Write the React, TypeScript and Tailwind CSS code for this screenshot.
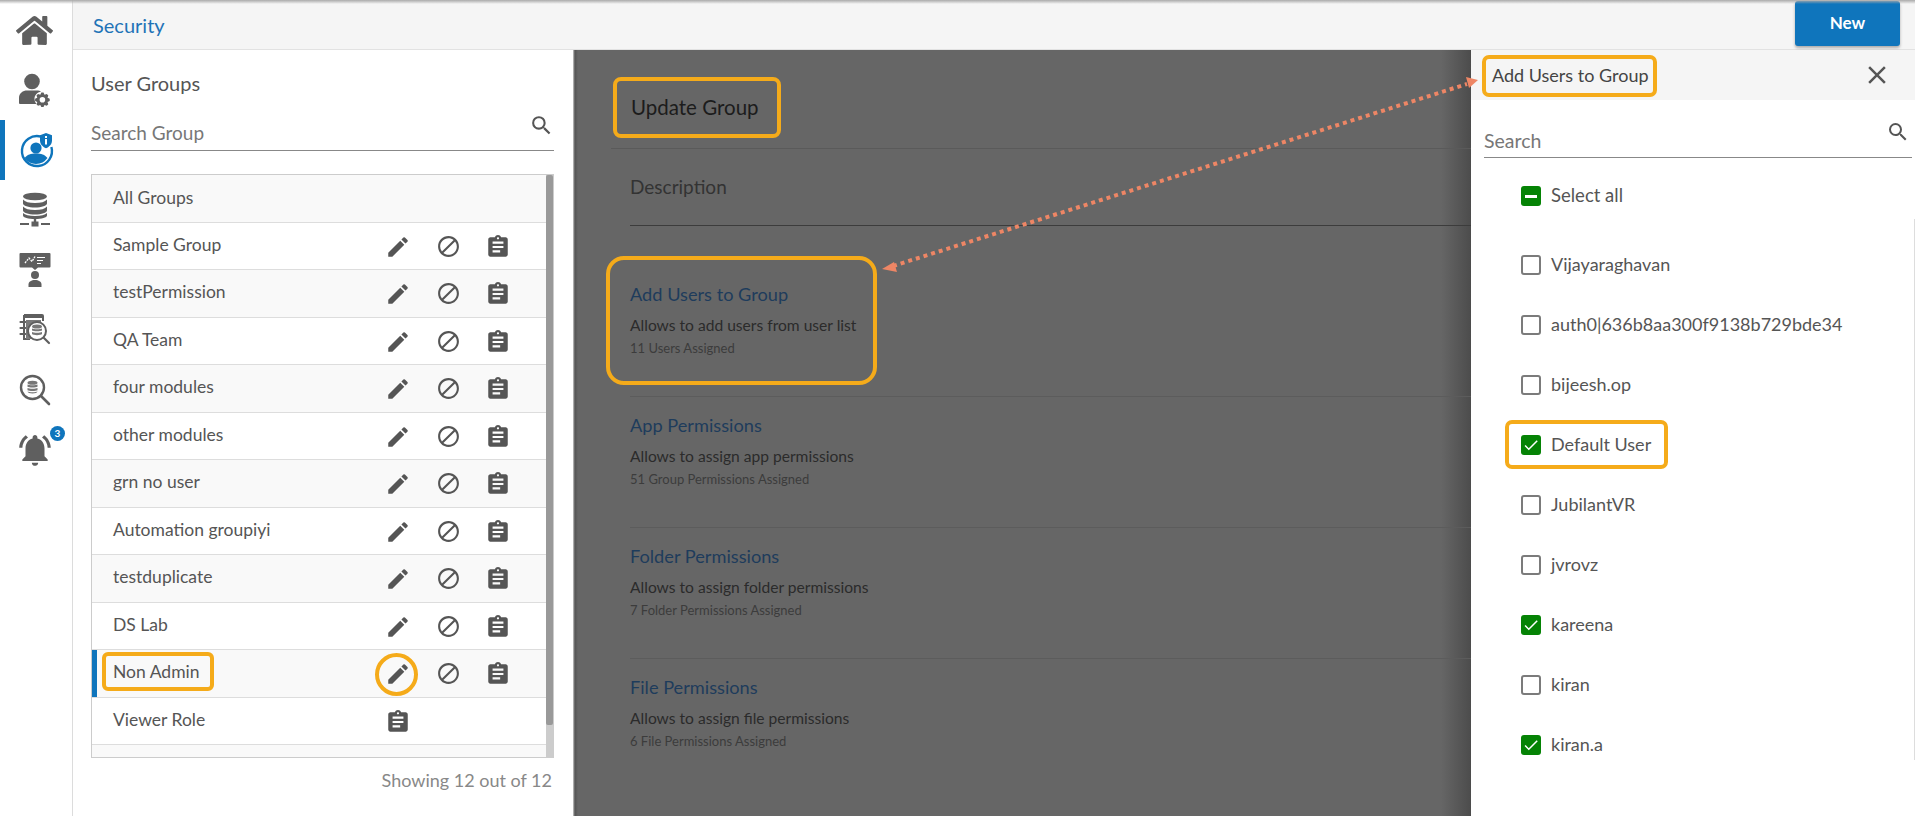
import { FaHome } from "react-icons/fa";
import { MdEdit, MdBlock, MdAssignment, MdSearch, MdClose, MdNotificationsActive, MdCheck } from "react-icons/md";
import type { ReactNode } from "react";

const GROUPS = [
  "Sample Group",
  "testPermission",
  "QA Team",
  "four modules",
  "other modules",
  "grn no user",
  "Automation groupiyi",
  "testduplicate",
  "DS Lab",
  "Non Admin",
];

const SECTIONS = [
  { title: "Add Users to Group", text: "Allows to add users from user list", count: "11 Users Assigned" },
  { title: "App Permissions", text: "Allows to assign app permissions", count: "51 Group Permissions Assigned" },
  { title: "Folder Permissions", text: "Allows to assign folder permissions", count: "7 Folder Permissions Assigned" },
  { title: "File Permissions", text: "Allows to assign file permissions", count: "6 File Permissions Assigned" },
];

const USERS = [
  { name: "Vijayaraghavan", checked: false },
  { name: "auth0|636b8aa300f9138b729bde34", checked: false },
  { name: "bijeesh.op", checked: false },
  { name: "Default User", checked: true },
  { name: "JubilantVR", checked: false },
  { name: "jvrovz", checked: false },
  { name: "kareena", checked: true },
  { name: "kiran", checked: false },
  { name: "kiran.a", checked: true },
];

const UserGearIcon = () => (
  <svg width="34" height="34" viewBox="0 0 34 34" fill="#5f5f5f">
    <circle cx="14" cy="8.500" r="7.800" />
    <path d="M1 31v-6c0-5 4-7.500 8-7.500h10c1.500 0 3 .4 4 1-4 1-6.500 4-6.500 7 0 2 .7 4 2 5.500H2a1 1 0 0 1-1-1z" />
    <path d="M25.500 19.500l1 2.200 2.300-.7 1.500 1.500-.8 2.200 2.200 1v2.300l-2.200 1 .8 2.200-1.500 1.500-2.300-.8-1 2.100h-2.200l-1-2.100-2.300.8-1.500-1.500.8-2.200-2.200-1v-2.300l2.200-1-.8-2.200 1.500-1.500 2.300.7 1-2.200zM24.400 24a2.800 2.800 0 1 0 0 5.600 2.800 2.800 0 0 0 0-5.600z" fillRule="evenodd" />
  </svg>
);

const SecurityIcon = () => (
  <svg width="36" height="36" viewBox="0 0 36 36">
    <path d="M22 4.600A15 15 0 1 0 32.400 15" fill="none" stroke="#0f75bc" strokeWidth="2.400" />
    <circle cx="17" cy="16" r="5.600" fill="#0f75bc" />
    <path d="M5.500 26c2.500-3.500 6.500-4.600 11.500-4.600s9 1.100 11.500 4.600A15 15 0 0 1 17 32 15 15 0 0 1 5.500 26z" fill="#0f75bc" />
    <path d="M27 1l6 2.200v5c0 4-2.600 6.500-6 8-3.400-1.500-6-4-6-8v-5z" fill="#0f75bc" />
    <rect x="26" y="7" width="2" height="5.500" fill="#fff" />
    <rect x="26" y="4" width="2" height="2" fill="#fff" />
  </svg>
);

const DatabaseIcon = () => (
  <svg width="32" height="36" viewBox="0 0 32 36" fill="#5f5f5f">
    <ellipse cx="16" cy="4.500" rx="12" ry="3.800" />
    <path d="M4 7.500c2 2.500 6 3.500 12 3.500s10-1 12-3.500v4c0 2.200-5.400 4-12 4s-12-1.800-12-4z" />
    <path d="M4 14.500c2 2.500 6 3.500 12 3.500s10-1 12-3.500v4c0 2.200-5.400 4-12 4s-12-1.800-12-4z" />
    <path d="M4 21c2 2 6 3 12 3s10-1 12-3v2.500c0 2-5.400 3.500-12 3.500s-12-1.500-12-3.500z" />
    <rect x="14.800" y="26" width="2.400" height="6" />
    <rect x="12.500" y="29.500" width="7" height="5" />
    <rect x="1" y="31" width="9" height="2" />
    <rect x="22" y="31" width="9" height="2" />
  </svg>
);

const PresenterIcon = () => (
  <svg width="32" height="36" viewBox="0 0 32 36">
    <path d="M1.500 1h29a1 1 0 0 1 1 1v12.500a1 1 0 0 1-1 1H19l-3 2.500-3-2.500H1.500a1 1 0 0 1-1-1V2a1 1 0 0 1 1-1z" fill="#5f5f5f" />
    <path d="M6 11l4-5 3 3.500 3-5" fill="none" stroke="#fff" strokeWidth="1.300" strokeDasharray="2 1" />
    <path d="M18 5.500h8M18 8.500h6M18 11.500h4" stroke="#fff" strokeWidth="1.200" />
    <circle cx="16" cy="23" r="4" fill="#5f5f5f" />
    <path d="M9.500 35v-2.500c0-3 3-4.500 6.500-4.500s6.500 1.500 6.500 4.500V35z" fill="#5f5f5f" />
  </svg>
);

const ReportIcon = () => (
  <svg width="32" height="34" viewBox="0 0 32 34">
    <path d="M5 2h18a1 1 0 0 1 1 1v5M5 2v24h6" fill="none" stroke="#5f5f5f" strokeWidth="2" />
    <path d="M5 2h19v3H5z" fill="#5f5f5f" />
    <path d="M1.500 9h5M1.500 15h5M1.500 21h5" stroke="#5f5f5f" strokeWidth="2.200" strokeLinecap="round" />
    <rect x="7" y="7" width="15" height="19" fill="#7a7a7a" />
    <circle cx="18" cy="18" r="9" fill="#fff" stroke="#5f5f5f" strokeWidth="2" />
    <ellipse cx="18" cy="13.500" rx="5" ry="2" fill="#777" />
    <path d="M13 15.500c1.500 1 8.500 1 10 0v2c-1.500 1-8.500 1-10 0zM13 19c1.500 1 8.500 1 10 0v2c-1 1.500-9 1.500-10 0z" fill="#777" />
    <path d="M25 25l5 5" stroke="#5f5f5f" strokeWidth="2.200" strokeLinecap="round" />
  </svg>
);

const DataSearchIcon = () => (
  <svg width="32" height="32" viewBox="0 0 32 32">
    <circle cx="13.500" cy="13.500" r="11.500" fill="none" stroke="#5f5f5f" strokeWidth="2.400" />
    <ellipse cx="13.500" cy="8.800" rx="5" ry="2" fill="#777" />
    <path d="M8.500 10.500c1.500 1 8.500 1 10 0v2.200c-1.500 1-8.500 1-10 0zM8.500 14c1.500 1 8.500 1 10 0v2.200c-1.500 1-8.500 1-10 0zM8.500 17.500c1.500 1 8.500 1 10 0c0 2.500-10 2.500-10 0z" fill="#777" />
    <path d="M22 22l8 8" stroke="#5f5f5f" strokeWidth="2.600" strokeLinecap="round" />
  </svg>
);

const NavItem = ({ children, active }: { children: ReactNode; active?: boolean }) => (
  <div className={`relative flex h-[60px] items-center justify-center pr-[3px] ${active ? "border-l-[5px] border-[#0f75bc]" : ""}`}>
    {children}
  </div>
);

const Check = ({ checked }: { checked: boolean }) =>
  checked ? (
    <span className="flex h-5 w-5 items-center justify-center rounded-[3px] bg-[#058305]">
      <MdCheck size={18} color="#fff" />
    </span>
  ) : (
    <span className="h-5 w-5 rounded-[3px] border-2 border-[#7b7b7b] bg-white" />
  );

export default function App() {
  return (
    <div className="relative flex h-[816px] w-[1915px] overflow-hidden bg-white font-['Lato','Noto_Sans',sans-serif] text-[#555]">
      {/* Icon rail */}
      <div className="w-[73px] shrink-0 border-r border-[#dcdcdc] bg-white">
        <NavItem><FaHome size={37} color="#5f5f5f" /></NavItem>
        <NavItem><UserGearIcon /></NavItem>
        <NavItem active><SecurityIcon /></NavItem>
        <NavItem><DatabaseIcon /></NavItem>
        <NavItem><PresenterIcon /></NavItem>
        <NavItem><ReportIcon /></NavItem>
        <NavItem><DataSearchIcon /></NavItem>
        <NavItem>
          <MdNotificationsActive size={38} color="#5f5f5f" />
          <span className="absolute right-[7px] top-[6px] flex h-[15px] w-[15px] items-center justify-center rounded-full bg-[#0f75bc] text-[10px] font-bold text-white">3</span>
        </NavItem>
      </div>

      <div className="flex min-w-0 flex-1 flex-col">
        {/* Top bar */}
        <div className="flex h-[50px] shrink-0 items-center justify-between border-b border-[#e2e2e2] bg-[#f5f5f5] pl-5 pr-[15px]">
          <span className="text-[20px] text-[#1f73b7]">Security</span>
          <button className="mb-[3px] h-[45px] w-[105px] rounded-[3px] bg-[#0f75bc] text-[17px] font-bold text-white shadow-[0_2px_3px_rgba(0,0,0,0.3)]">New</button>
        </div>

        <div className="flex min-h-0 flex-1">
          {/* User groups */}
          <div className="w-[500px] shrink-0 pl-[18px] pr-[19px]">
            <h2 className="mt-[22px] text-[20px] leading-[22px] text-[#555]">User Groups</h2>
            <div className="mt-[22px] flex h-[35px] items-start justify-between border-b border-[#888] pt-[6px]">
              <span className="text-[19px] leading-[22px] text-[#777]">Search Group</span>
              <MdSearch size={25} color="#555" className="-mt-[9px]" />
            </div>
            <div className="relative mt-[23px] h-[584px] overflow-hidden border border-[#ccc]">
              <div className="flex h-[47.5px] items-center border-b border-[#ddd] bg-[#f9f9f9] pl-[21px] text-[17.500px]">All Groups</div>
              {GROUPS.map((g, i) => (
                <div key={g} className={`relative flex h-[47.5px] items-center border-b border-[#ddd] pl-[21px] pr-[30px] text-[17.500px] ${i % 2 === 1 ? "bg-[#f9f9f9]" : "bg-white"}`}>
                  {g === "Non Admin" && <span className="absolute bottom-0 left-0 top-0 w-[5px] bg-[#0f75bc]" />}
                  <span className="-mt-[2px] flex-1">{g}</span>
                  <div className="mt-[2px] flex w-[150px] shrink-0">
                    <span className="flex w-[50px] justify-center"><MdEdit size={26} color="#555" /></span>
                    <span className="flex w-[50px] justify-center"><MdBlock size={25} color="#555" /></span>
                    <span className="flex w-[50px] justify-center"><MdAssignment size={26} color="#555" /></span>
                  </div>
                </div>
              ))}
              <div className="flex h-[47.5px] items-center border-b border-[#ddd] pl-[21px] pr-[30px] text-[17.500px]">
                <span className="-mt-[2px] flex-1">Viewer Role</span>
                <div className="mt-[2px] flex w-[150px] shrink-0">
                  <span className="flex w-[50px] justify-center"><MdAssignment size={26} color="#555" /></span>
                </div>
              </div>
              <div className="h-[20px] bg-[#f9f9f9]" />
              {/* scrollbar */}
              <div className="absolute bottom-0 right-0 top-0 w-[7px] bg-[#ccc]">
                <div className="h-[550px] rounded-[2px] bg-[#999]" />
              </div>
            </div>
            <p className="mt-[9px] pr-[2px] text-right text-[18px] text-[#888]">Showing 12 out of 12</p>
          </div>

          {/* Update group, behind the backdrop */}
          <div className="w-[898px] shrink-0 bg-[linear-gradient(90deg,#d0d0d0_0,#888_1px,#555_2px,#666_5px,#666_868px,#4c4c4c_100%)] pl-[38px]">
            <div className="flex h-[99px] items-center border-b border-[#5a5a5a] pl-[20px] pt-[16px]">
              <h1 className="text-[20.500px] text-[#1c1c1c]">Update Group</h1>
            </div>
            <div className="ml-[19px]">
              <div className="h-[77px] border-b border-[#3c3c3c] pt-[27px] text-[19px] leading-[22px] text-[#333]">Description</div>
            </div>
            {SECTIONS.map((s, i) => (
              <div key={s.title} className={`ml-[19px] border-b border-[#5c5c5c] ${i === 0 ? "h-[171px] pt-[57px]" : "h-[131px] pt-[17px]"} ${i === 3 ? "border-b-0" : ""}`}>
                <h3 className="text-[18.200px] leading-[22px] text-[#1e3c5c]">{s.title}</h3>
                <p className="mt-[9.500px] text-[15.600px] leading-[20px] text-[#2b2b2b]">{s.text}</p>
                <p className="mt-[5.500px] text-[13px] leading-[16px] text-[#3c3c3c]">{s.count}</p>
              </div>
            ))}
          </div>

          {/* Add users drawer */}
          <div className="relative min-w-0 flex-1 bg-white">
            <div className="flex h-[50px] items-center justify-between bg-[#f5f5f5] pl-[21px] pr-[23px]">
              <span className="text-[18px] text-[#444]">Add Users to Group</span>
              <MdClose size={30} color="#555" />
            </div>
            <div className="ml-[13px] mr-[3px] mt-[20px] flex h-[38px] items-start justify-between border-b border-[#888] pt-[9px]">
              <span className="text-[19.500px] leading-[24px] text-[#777]">Search</span>
              <MdSearch size={24} color="#555" className="mr-[2px] -mt-[9px]" />
            </div>
            <div className="ml-[50px] mt-[28px] flex h-[20px] items-center gap-[10px] text-[18.500px]">
              <span className="flex h-5 w-5 items-center justify-center rounded-[3px] bg-[#058305]">
                <span className="h-[3px] w-[12px] bg-white" />
              </span>
              <span>Select all</span>
            </div>
            <div className="ml-[50px] mt-[29px]">
              {USERS.map((u) => (
                <div key={u.name} className="flex h-[60px] items-center gap-[10px] text-[18px]">
                  <Check checked={u.checked} />
                  <span className="-mt-[1px]">{u.name}</span>
                </div>
              ))}
            </div>
            <div className="absolute right-0 top-[169px] h-[541px] w-px bg-[#ddd]" />
          </div>
        </div>
      </div>

      {/* top window shadow */}
      <div className="pointer-events-none absolute left-0 right-0 top-0 h-[4px] bg-gradient-to-b from-[#aaa] to-transparent" />

      {/* Callouts drawn on top of the screenshot */}
      <div className="pointer-events-none absolute left-[102px] top-[652px] h-[39px] w-[112px] rounded-[6px] border-[4px] border-[#f5ab1a]" />
      <div className="pointer-events-none absolute left-[375px] top-[653px] h-[43px] w-[43px] rounded-full border-[4px] border-[#f5ab1a]" />
      <div className="pointer-events-none absolute left-[613px] top-[77px] h-[61px] w-[168px] rounded-[8px] border-[4px] border-[#f5ab1a]" />
      <div className="pointer-events-none absolute left-[606px] top-[256px] h-[129px] w-[271px] rounded-[18px] border-[4px] border-[#f5ab1a]" />
      <div className="pointer-events-none absolute left-[1482px] top-[55px] h-[42px] w-[175px] rounded-[7px] border-[4px] border-[#f5ab1a]" />
      <div className="pointer-events-none absolute left-[1505px] top-[420px] h-[49px] w-[163px] rounded-[7px] border-[4px] border-[#f5ab1a]" />
      <svg className="pointer-events-none absolute left-0 top-0" width="1915" height="816">
        <line x1="893" y1="266" x2="1467" y2="84" stroke="#ee8665" strokeWidth="4" strokeDasharray="4 4" />
        <path d="M882 269l12-7 3 10z" fill="#ee8665" />
        <path d="M1478 80l-12-3 3 11z" fill="#ee8665" />
      </svg>
    </div>
  );
}
